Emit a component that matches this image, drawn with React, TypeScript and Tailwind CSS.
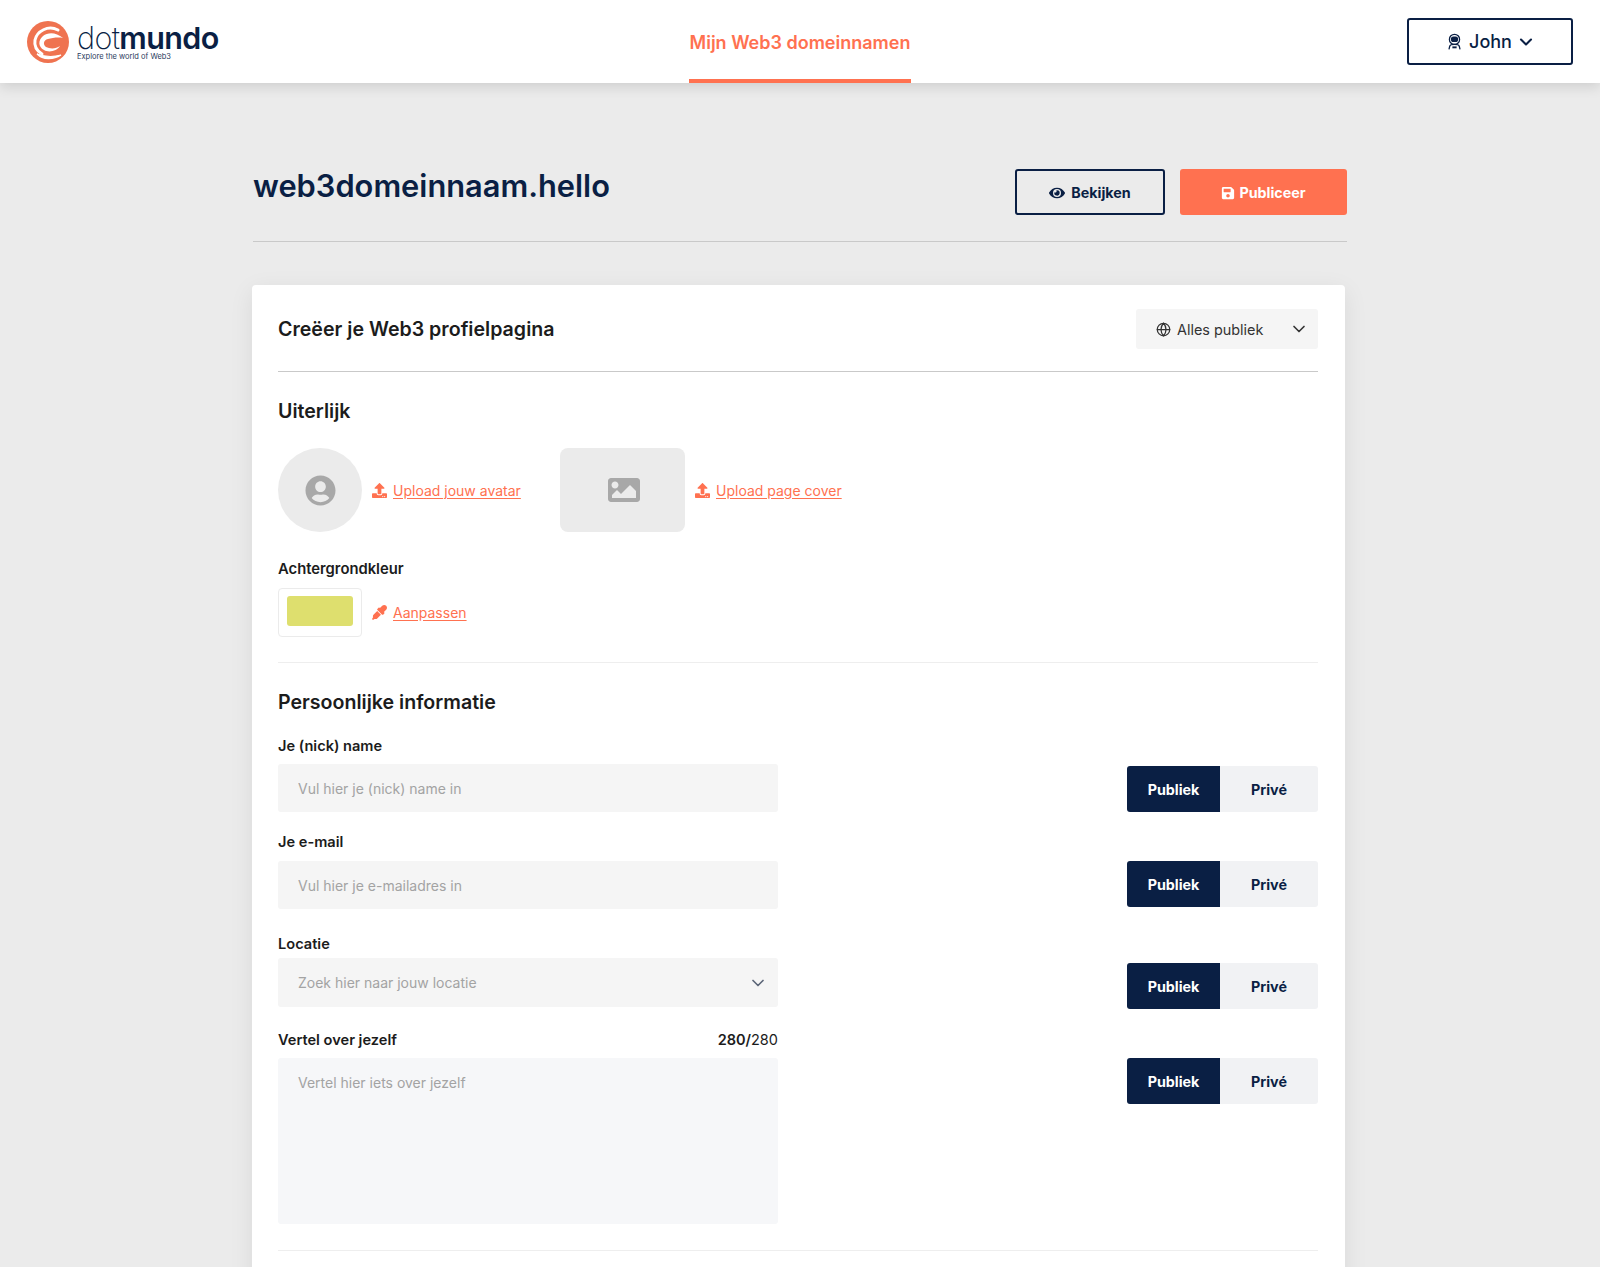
import { ChevronDown, Globe } from "lucide-react";
import { FaEye, FaSave, FaUpload, FaEyeDropper, FaUserCircle, FaImage } from "react-icons/fa";

const font = { fontFamily: '"Inter", "Noto Sans", sans-serif' };

function Logo() {
  return (
    <div className="ml-px flex items-center gap-[8px]">
      <svg width="42" height="42" viewBox="0 0 42 42">
        <circle cx="21" cy="21" r="21" fill="#ef7350" />
        <path d="M31 9C21 4 10 10 8 19c-1 6 2 11 7 14" fill="none" stroke="#fff" strokeWidth="3" strokeLinecap="round" />
        <path d="M16 15c5-4 13-4 20 2-5-1-11 0-15 1-5 1-5 6-2 8 4 2 10 2 14-1-3 5-11 7-16 4-6-3-6-10-1-14z" fill="#fff" />
        <path d="M10 33c6 6 16 6 24 1-7 2-16 2-24-1z" fill="#fff" stroke="#fff" strokeWidth="1.200" />
      </svg>
      <div className="flex flex-col pt-[3px]">
        <div className="text-[30.5px] leading-[26px] tracking-[-0.6px] text-[#0a1f44]">
          <span className="font-extralight">dot</span>
          <span className="font-semibold">mundo</span>
        </div>
        <div className="mt-[2px] text-[7.5px] leading-[8px] text-[#2a3a5c]">Explore the world of Web3</div>
      </div>
    </div>
  );
}

function Astronaut() {
  return (
    <svg width="17" height="17" viewBox="0 0 16 16" fill="none" stroke="#0a1f44" strokeWidth="1.2">
      <circle cx="8" cy="6" r="4.8" />
      <rect x="5.2" y="3.8" width="5.6" height="4" rx="1.8" fill="#0a1f44" />
      <path d="M2.8 15.5l.7-3c.3-1 2-1.700 4.500-1.700s4.200.7 4.500 1.700l.7 3" />
      <path d="M6 13.500h4" strokeWidth="1.800" />
    </svg>
  );
}

function Toggle({ className }: { className: string }) {
  return (
    <div className={`flex h-[46px] w-[191px] text-[14.3px] font-bold ${className}`}>
      <div className="flex w-[93px] items-center justify-center rounded-l-[3px] bg-[#0a1f44] pt-px text-white">Publiek</div>
      <div className="flex flex-1 items-center justify-center rounded-r-[3px] bg-[#f1f2f4] pt-px text-[#0a1f44]">Privé</div>
    </div>
  );
}

function UploadLink({ children }: { children: string }) {
  return (
    <a className="flex items-center gap-1.5 whitespace-nowrap text-[14px] text-[#ff7150]">
      <FaUpload size={15} />
      <span className="pt-px underline underline-offset-2">{children}</span>
    </a>
  );
}

export default function App() {
  return (
    <div className="h-[1267px] overflow-hidden bg-[#ebebeb] text-[#1c1c1c]" style={font}>
      <header className="relative flex h-[83px] items-center justify-between bg-white pl-[26px] pr-[27px] shadow-[0_4px_12px_rgba(0,0,0,0.12)]">
        <Logo />
        <a className="absolute left-[689px] top-0 flex h-[83px] w-[222px] items-center justify-center whitespace-nowrap border-b-4 border-[#ff7150] pt-[6px] text-[18px] font-semibold text-[#ff7150]">
          Mijn Web3 domeinnamen
        </a>
        <button className="flex h-[47px] w-[166px] items-center justify-center gap-[6px] rounded-[3px] border-2 border-[#0a1f44] pl-[2px] text-[18px] font-medium text-[#0a1f44]">
          <Astronaut />
          John
          <ChevronDown size={20} strokeWidth={2.5} className="-ml-[2px]" />
        </button>
      </header>

      <main className="mx-auto w-[1094px] pt-[86px]">
        <div className="flex items-start justify-between border-b border-[#c9c9c9] pb-[26px]">
          <h1 className="text-[30.8px] font-semibold leading-[34px] text-[#0a1f44]">web3domeinnaam.hello</h1>
          <div className="flex gap-[15px]">
            <button className="flex h-[46px] w-[150px] items-center justify-center gap-1.5 rounded-[3px] border-2 border-[#0a1f44] pt-px text-[14.3px] font-bold text-[#0a1f44]">
              <FaEye size={16} />
              Bekijken
            </button>
            <button className="flex h-[46px] w-[167px] items-center justify-center gap-1 rounded-[3px] bg-[#ff7150] pt-px text-[14.3px] font-bold text-white">
              <FaSave size={14} />
              Publiceer
            </button>
          </div>
        </div>

        <section className="-ml-px mt-[43px] w-[1093px] rounded-[4px] bg-white pl-[26px] pr-[27px] pt-6 pb-10 shadow-[0_6px_24px_rgba(0,0,0,0.08)]">
          <div className="flex items-center justify-between border-b border-[#c9c9c9] pb-[22px]">
            <h2 className="pt-[2px] text-[19.6px] font-semibold">Creëer je Web3 profielpagina</h2>
            <div className="flex h-10 w-[182px] items-center rounded-[3px] bg-[#f5f5f5] pl-5 pr-[9px] text-[14.4px] text-[#333]">
              <Globe size={15} />
              <span className="ml-1.5 flex-1 pt-[2px]">Alles publiek</span>
              <ChevronDown size={20} />
            </div>
          </div>

          <h3 className="mt-[26px] text-[19.6px] font-semibold leading-[26px]">Uiterlijk</h3>
          <div className="mt-[24px] flex items-center">
            <div className="flex h-[84px] w-[84px] items-center justify-center rounded-full bg-[#ebebeb] text-[#a8a8a8]">
              <FaUserCircle size={31} />
            </div>
            <div className="ml-[10px] w-[153px]"><UploadLink>Upload jouw avatar</UploadLink></div>
            <div className="ml-[35px] flex h-[84px] w-[125px] items-center justify-center rounded-[8px] bg-[#ebebeb] text-[#a8a8a8]">
              <FaImage size={32} className="ml-[2px]" />
            </div>
            <div className="ml-[10px]"><UploadLink>Upload page cover</UploadLink></div>
          </div>

          <div className="mt-[28px] text-[14.8px] font-semibold leading-[18px]">Achtergrondkleur</div>
          <div className="mt-[10px] flex items-center border-b border-[#eeeeee] pb-[25px]">
            <div className="flex h-[49px] w-[84px] items-center justify-center rounded-[4px] border border-[#ebebeb]">
              <div className="mb-[3px] h-[30px] w-[66px] rounded-[3px] bg-[#dedf6e]" />
            </div>
            <a className="ml-[10px] flex items-center gap-1.5 text-[14px] text-[#ff7150]">
              <FaEyeDropper size={15} />
              <span className="underline underline-offset-2">Aanpassen</span>
            </a>
          </div>

          <h3 className="mt-[26px] text-[19.6px] font-semibold leading-[26px]">Persoonlijke informatie</h3>

          <div className="mt-[22px] flex items-end justify-between">
            <label className="block w-[500px]">
              <span className="block text-[14.6px] font-semibold leading-[18px]">Je (nick) name</span>
              <input placeholder="Vul hier je (nick) name in" className="mt-[9px] h-[48px] w-full rounded-[3px] bg-[#f5f5f5] px-5 text-[14px] placeholder:text-[#a3a3a3]" />
            </label>
            <Toggle className="" />
          </div>

          <div className="mt-[21px] flex items-end justify-between">
            <label className="block w-[500px]">
              <span className="block text-[14.6px] font-semibold leading-[18px]">Je e-mail</span>
              <input placeholder="Vul hier je e-mailadres in" className="mt-[10px] h-[48px] w-full rounded-[3px] bg-[#f5f5f5] px-5 text-[14px] placeholder:text-[#a3a3a3]" />
            </label>
            <Toggle className="mb-[2px]" />
          </div>

          <div className="mt-[26px] flex items-start justify-between">
            <div className="w-[500px]">
              <span className="block text-[14.6px] font-semibold leading-[18px]">Locatie</span>
              <div className="mt-[5px] flex h-[49px] items-center justify-between rounded-[3px] bg-[#f5f5f5] pl-5 pr-[10px] text-[14px] text-[#a3a3a3]">
                Zoek hier naar jouw locatie
                <ChevronDown size={20} className="text-[#5b6577]" />
              </div>
            </div>
            <Toggle className="mt-[28px]" />
          </div>

          <div className="mt-[22px] flex items-start justify-between">
            <div className="w-[500px]">
              <div className="flex justify-between text-[14.6px] leading-[18px]">
                <span className="font-semibold">Vertel over jezelf</span>
                <span className="text-[14.5px]"><b className="font-semibold">280/</b>280</span>
              </div>
              <textarea placeholder="Vertel hier iets over jezelf" className="mt-[9px] block h-[166px] w-full resize-none rounded-[3px] bg-[#f6f7f9] px-5 py-[14px] text-[14px] placeholder:text-[#a3a3a3]" />
            </div>
            <Toggle className="mt-[27px]" />
          </div>

          <div className="mt-[26px] border-b border-[#eeeeee]" />
        </section>
      </main>
    </div>
  );
}
